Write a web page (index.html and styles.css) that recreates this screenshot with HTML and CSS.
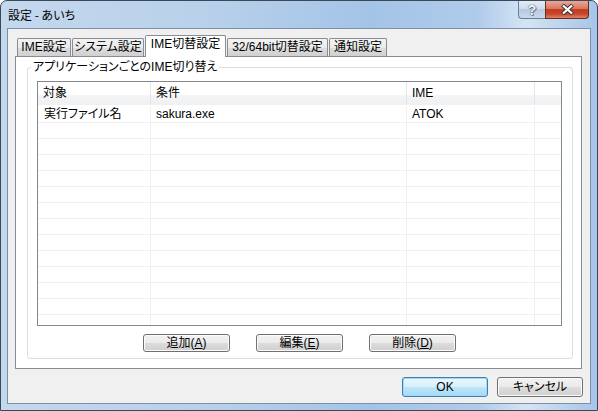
FILE: index.html
```html
<!DOCTYPE html>
<html>
<head>
<meta charset="UTF-8">
<title>設定 - あいち</title>
<link rel="stylesheet" href="styles.css">
</head>
<body>

<div class="window">
  <div class="titlebar">
    <div class="title">設定 - あいち</div>
    <div class="caption">
      <div class="cbtn help"><span>?</span></div>
      <div class="cbtn close">
        <svg width="13" height="11" viewBox="0 0 13 11">
          <path d="M1.5 1 L11.5 10 M11.5 1 L1.5 10" stroke="#3a3a3a" stroke-width="4.2"/>
          <path d="M2 1.5 L11 9.5 M11 1.5 L2 9.5" stroke="#fff" stroke-width="2.2"/>
        </svg>
      </div>
    </div>
  </div>

  <div class="client">
    <div class="tabs">
      <div class="tab tab-ime">IME設定</div>
      <div class="tab tab-sys">システム設定</div>
      <div class="tab tab-switch active">IME切替設定</div>
      <div class="tab tab-bit">32/64bit切替設定</div>
      <div class="tab tab-notify">通知設定</div>
    </div>

    <div class="panel">
      <div class="group">
        <div class="group-label">アプリケーションごとのIME切り替え</div>

        <div class="listview">
          <div class="lv-head">
            <div class="cell">対象</div>
            <div class="cell">条件</div>
            <div class="cell">IME</div>
            <div class="cell"></div>
          </div>
          <div class="lv-body" id="rows">
            <div class="lv-row">
              <div class="cell">実行ファイル名</div>
              <div class="cell">sakura.exe</div>
              <div class="cell">ATOK</div>
              <div class="cell"></div>
            </div>
          </div>
        </div>

        <div class="actions">
          <button class="btn">追加(<u>A</u>)</button>
          <button class="btn">編集(<u>E</u>)</button>
          <button class="btn">削除(<u>D</u>)</button>
        </div>
      </div>
    </div>

    <div class="footer">
      <button class="btn btn-dlg btn-default">OK</button>
      <button class="btn btn-dlg">キャンセル</button>
    </div>
  </div>
</div>

<script>
// empty rows so the grid lines fill the list
var rows = document.getElementById("rows");
for (var i = 0; i < 13; i++) {
  var r = document.createElement("div");
  r.className = "lv-row";
  r.innerHTML = '<div class="cell"></div><div class="cell"></div><div class="cell"></div><div class="cell"></div>';
  rows.appendChild(r);
}
</script>

</body>
</html>
```

FILE: styles.css
```css
body { margin:0; background:#fff; font-family:"Liberation Sans","Noto Sans CJK JP",sans-serif; font-size:12px; color:#000; font-feature-settings:"palt"; }

.window { width:598px; height:411px; box-sizing:border-box; border:1px solid #3b4858; border-radius:7px 7px 0 0; padding:0 6px 6px; display:flex; flex-direction:column;
  background:linear-gradient(to right, #c4d8ee 0%, #b8d0ea 35%, #a4c4e7 62%, #b0cbea 80%, #d4e4f4 88%, #a6c5e8 100%); }

.titlebar { height:27px; display:flex; align-items:flex-start; }
.title { flex:1; padding:6px 0 0 1px; font-size:12px; line-height:16px; font-family:"Noto Sans CJK JP",sans-serif; }
.caption { display:flex; margin-right:2px; }
.cbtn { height:18px; box-sizing:border-box; display:flex; align-items:center; justify-content:center; }
.help { width:27px; border:1px solid #6f7d90; border-right:none; border-top:none; border-radius:0 0 0 4px;
  background:linear-gradient(#e4edf7, #cbdaec 50%, #b6c9e0 50%, #c9daee); }
.help span { font-family:"Liberation Sans",sans-serif; font-feature-settings:normal; font-weight:bold; font-size:14px; line-height:14px; color:#f2f5f8;
  text-shadow:0 0 1px #4a5562, 0 0 1px #4a5562, 1px 1px 0 #7a8696; }
.close { width:44px; border:1px solid #6b2a20; border-top:none; border-radius:0 0 4px 0;
  background:linear-gradient(#eaa797 0%, #d9785f 45%, #c73c22 50%, #c6442a 75%, #df8464 100%); }

.client { flex:1; border:1px solid #7f8fa3; background:#f0f0f0; display:flex; flex-direction:column; }

.tabs { display:flex; align-items:flex-end; margin:6px 0 0 9px; }
.tab { box-sizing:border-box; height:18px; border:1px solid #898c95; border-bottom:none; border-radius:2px 2px 0 0; margin-right:1px; text-align:center; line-height:16px; white-space:nowrap;
  background:linear-gradient(#f3f3f3, #ebebeb 50%, #dedede 50%, #d0d0d0); }
.tab.active { height:22px; background:#fff; margin-bottom:-1px; position:relative; z-index:1; }
.tab-ime { width:54px; }
.tab-sys { width:72px; }
.tab-switch { width:81px; }
.tab-bit { width:101px; }
.tab-notify { width:58px; }

.panel { margin-left:7px; width:567px; height:313px; box-sizing:border-box; border:1px solid #898c95; background:#fff; padding:10px 8px 0 11px; }

.group { border:1px solid #d5dfe5; border-radius:3px; display:flex; flex-direction:column; padding:0 10px 6px 9px; }
.group-label { align-self:flex-start; margin:-8px 0 0 -6px; padding:0 2px; background:#fff; line-height:14px; }

.listview { margin-top:7px; height:245px; box-sizing:border-box; border:1px solid #828790; background:#fff; overflow:hidden; }
.lv-head, .lv-row { display:grid; grid-template-columns:113px 256px 128px 1fr; }
.lv-head { height:23px; background:linear-gradient(#fff 0, #fff 55%, #f4f5f6 56%, #eff0f2); }
.lv-head .cell { border-right:1px solid #e3e5e8; padding-left:5px; line-height:23px; }
.lv-body { padding-top:2px; }
.lv-row { height:16px; box-sizing:border-box; border-bottom:1px solid #f0f0f0; }
.lv-row .cell { border-right:1px solid #f0f0f0; padding-left:5px; line-height:15px; white-space:nowrap; }
.lv-row .cell:first-child { padding-left:6px; }
.cell:last-child { border-right:none; }

.actions { display:flex; justify-content:center; gap:26px; margin-top:8px; }
.btn { width:87px; height:18px; box-sizing:border-box; padding:0; border:1px solid #707070; border-radius:3px; font:inherit; line-height:14px; color:#000;
  background:linear-gradient(#f2f2f2, #ebebeb 50%, #dddddd 50%, #cfcfcf); box-shadow:inset 0 0 0 1px #fbfbfb; }

.footer { display:flex; justify-content:flex-end; gap:9px; margin:8px 7px 0 0; }
.btn-dlg { width:86px; height:20px; }
.btn-default { border-color:#3c7fb1; box-shadow:inset 0 0 0 1px #9fdaf9;
  background:linear-gradient(#eaf6fd, #d9f0fc 50%, #bee6fd 50%, #a7d9f5); }
```
